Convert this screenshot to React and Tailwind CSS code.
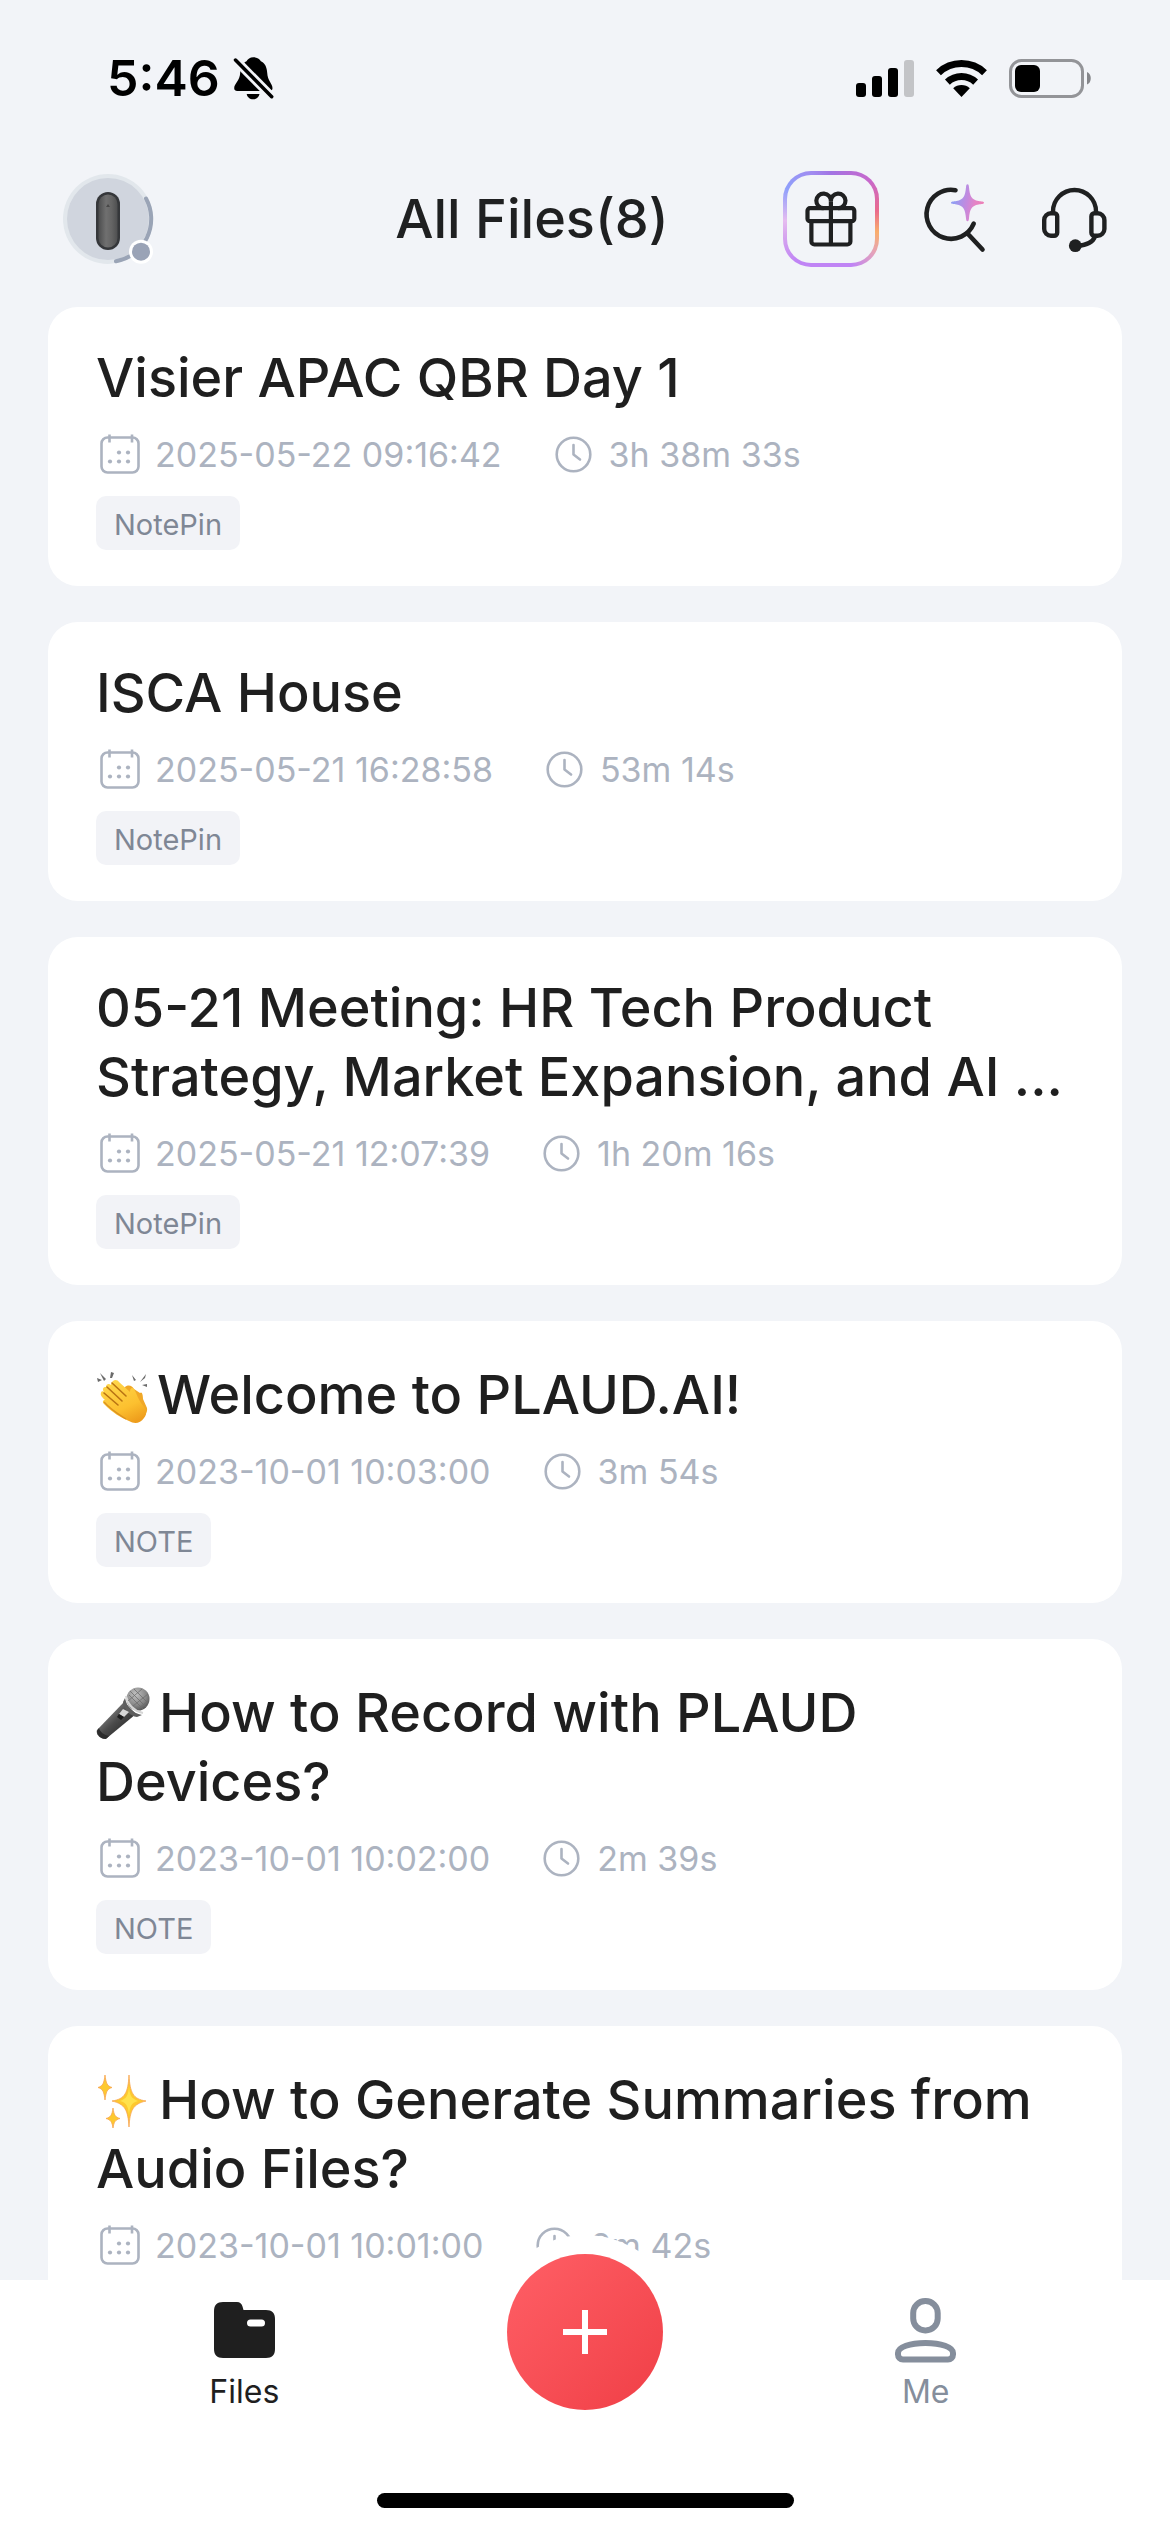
const FILES = [
  { title: "Visier APAC QBR Day 1", date: "2025-05-22 09:16:42", length: "3h 38m 33s", tag: "NotePin" },
  { title: "ISCA House", date: "2025-05-21 16:28:58", length: "53m 14s", tag: "NotePin" },
  {
    title: "05-21 Meeting: HR Tech Product Strategy, Market Expansion, and AI ...",
    date: "2025-05-21 12:07:39",
    length: "1h 20m 16s",
    tag: "NotePin",
  },
  { emoji: ClapEmoji, title: "Welcome to PLAUD.AI!", date: "2023-10-01 10:03:00", length: "3m 54s", tag: "NOTE" },
  { emoji: MicEmoji, title: "How to Record with PLAUD Devices?", date: "2023-10-01 10:02:00", length: "2m 39s", tag: "NOTE" },
  {
    emoji: SparklesEmoji,
    title: "How to Generate Summaries from Audio Files?",
    date: "2023-10-01 10:01:00",
    length: "2m 42s",
    tag: "NOTE",
  },
];

function ClapEmoji() {
  return (
    <svg className="inline-block h-[54px] w-[52px] align-[-10px]" viewBox="0 0 52 54" role="img" aria-label="Clapping hands">
      <defs>
        <linearGradient id="skin" x1="0.2" y1="0" x2="0.7" y2="1">
          <stop offset="0" stopColor="#ffd84e" />
          <stop offset="0.65" stopColor="#fcc02f" />
          <stop offset="1" stopColor="#ee9d1c" />
        </linearGradient>
      </defs>
      <g fill="#6b6b6b">
        <path d="M1 8l5 2-4 2zM4 3l6 6-2 2zM15 2l3 1-2 5-2 0zM36 5l4 5-2 1zM50 4l-1 4-5 4zM46 15l5-1v3z" />
      </g>
      <path d="M29 17c4-3 7-1 9 2l6 4c2-2 3 2 3 6l4 9c1 5-3 9-8 13l-10-2-14-19z" fill="#f0a827" />
      <path
        d="M17 11c2-2 5-1 6 1l11 10c0-4 2-5 4-3 3 5 4 10 7 14 5 6 7 10 3 15-4 6-10 6-15 3C24 47 17 43 8 34c-2-2-1-4 1-4-3-3-5-5-4-7 0-2 2-2 3-1-2-3-1-5 2-5 0-3 3-4 5-2 0-2 1-3 2-4z"
        fill="url(#skin)"
      />
      <path d="M16 13l14 13M11 17l15 14M8 23l14 12" stroke="#b97313" strokeWidth="1.6" strokeLinecap="round" fill="none" />
      <path d="M8 32c7 8 14 12 22 17" stroke="#dc9320" strokeWidth="1.4" fill="none" />
    </svg>
  );
}

function MicEmoji() {
  return (
    <svg className="inline-block h-[54px] w-[54px] align-[-9px]" viewBox="0 0 54 54" role="img" aria-label="Microphone">
      <defs>
        <linearGradient id="micBody" x1="0" y1="0" x2="1" y2="1">
          <stop offset="0.2" stopColor="#8a8a8a" />
          <stop offset="0.5" stopColor="#4b4b4b" />
          <stop offset="0.9" stopColor="#1f1f1f" />
        </linearGradient>
        <radialGradient id="micHead" cx="0.4" cy="0.3" r="0.8">
          <stop offset="0" stopColor="#c2c2c2" />
          <stop offset="0.6" stopColor="#858585" />
          <stop offset="1" stopColor="#474747" />
        </radialGradient>
      </defs>
      <path d="M28 15l12 12L11 51c-4 3-12-3-10-8z" fill="url(#micBody)" />
      <path d="M1 44c0 4 4 8 9 8l3-3C8 48 4 45 3 41z" fill="#2c2c2c" />
      <circle cx="42" cy="12" r="11.5" fill="url(#micHead)" />
      <path d="M29 11c2 9 7 15 17 17l-5 2c-7-1-13-7-14-15z" fill="#5e5e5e" />
      <path d="M30 9c2 9 8 15 17 17" stroke="#d5d5d5" strokeWidth="2" fill="none" />
      <path d="M34 4l16 16M38 2l14 14M33 8l14 14M32 14L46 2M37 19L52 7M42 22l11-9" stroke="#6d6d6d" strokeWidth="0.8" />
      <path d="M27 22l6 3-5 5-5-3z" fill="#d6d6d6" />
      <path d="M23 27l5 3-3 3-4-3z" fill="#1c1c1c" />
    </svg>
  );
}

function SparklesEmoji() {
  return (
    <svg className="inline-block h-[54px] w-[54px] align-[-9px]" viewBox="0 0 54 54" role="img" aria-label="Sparkles">
      <g fill="#fdc92f" stroke="#f7a552" strokeWidth="0.8">
        <path d="M33 1c1 18 4 24 17 26-13 3-16 9-17 26-1-17-4-23-17-26 13-2 16-8 17-26z" />
        <path d="M9 1c1 8 2 11 7 12.500-5 1.500-6 4.500-7 12.500-1-8-2-11-7-12.500 5-1.500 6-4.500 7-12.500z" />
        <path d="M17 34c1 7 2 9 7 10.500-5 1.500-6 3.500-7 9.500-1-6-2-8-7-9.500 5-1.500 6-3.500 7-10.500z" />
      </g>
      <path d="M33 13c1 9 2 11 9 14-7 2-8 5-9 14-1-9-2-12-9-14 7-3 8-5 9-14z" fill="#ffe24d" />
    </svg>
  );
}

function StatusBar() {
  return (
    <div className="flex h-[156px] shrink-0 items-center justify-between pl-[107px] pr-[78px]">
      <div className="flex items-center gap-[12px] text-black">
        <span className="text-[50px] leading-none font-semibold">5:46</span>
        <svg className="h-[46px] w-[44px]" viewBox="0 0 44 46" role="img" aria-label="Silent mode">
          <path d="M21.3 2.3c-3.3 0-5.6 1.8-6.8 4-4 1.8-6 6-6.3 11.5C7.9 26 2.2 28.5 2.2 33.3c0 1.8 1.3 2.8 3 2.8h32.3c1.7 0 3-1 3-2.8 0-4.8-5-7.3-5.3-15.5-.3-5.5-2.3-9.7-6.3-11.5-1.2-2.2-4.3-4-7.6-4z" />
          <path d="M14.7 39h12.8c-.6 3.200-3 5.300-6.400 5.300s-5.800-2.100-6.400-5.300z" />
          <path d="M3.500 5l36.200 36.700" stroke="#f2f4f8" strokeWidth="9" />
          <path d="M3.500 5l36.200 36.700" stroke="#000" strokeWidth="3.500" strokeLinecap="round" />
        </svg>
      </div>
      <div className="flex items-center">
        <svg className="mr-[22px] h-[37px] w-[58px]" viewBox="0 0 58 37" role="img" aria-label="Cellular signal">
          <rect x="0" y="23" width="10" height="14" rx="3" />
          <rect x="16" y="16" width="10" height="21" rx="3" />
          <rect x="32" y="8" width="10" height="29" rx="3" />
          <rect x="48" y="0" width="10" height="37" rx="3" fill="#c3c4c7" />
        </svg>
        <svg className="mr-[22px] h-[37px] w-[51px]" viewBox="0 0 51 37" role="img" aria-label="Wi-Fi">
          <path d="M2.500 12.700a33.500 33.500 0 0 1 46 0" fill="none" stroke="#000" strokeWidth="7" />
          <path d="M11.400 22.100a20.500 20.500 0 0 1 28.200 0" fill="none" stroke="#000" strokeWidth="7" />
          <path d="M25.500 37l-8.300-8.700a12 12 0 0 1 16.600 0z" />
        </svg>
        <svg className="h-[39px] w-[83px]" viewBox="0 0 83 39" role="img" aria-label="Battery">
          <rect x="1.500" y="1.500" width="72" height="36" rx="11" fill="none" stroke="#939498" strokeWidth="3" />
          <rect x="6" y="6" width="25" height="27" rx="6" />
          <path d="M78 13c5 1.500 5 11 0 12.500z" fill="#85868a" />
        </svg>
      </div>
    </div>
  );
}

function DeviceAvatar() {
  return (
    <svg className="h-[93px] w-[93px]" viewBox="0 0 93 93" aria-hidden="true">
      <defs>
        <linearGradient id="pill" x1="0" x2="1" y1="0" y2="0">
          <stop offset="0" stopColor="#4c4d4e" />
          <stop offset="0.4" stopColor="#707070" />
          <stop offset="0.7" stopColor="#646464" />
          <stop offset="1" stopColor="#4e4f50" />
        </linearGradient>
      </defs>
      <circle cx="46" cy="46" r="45" fill="#e2e7ec" />
      <circle cx="46" cy="46" r="41" fill="#d0d5de" />
      <rect x="34" y="19" width="24" height="58" rx="12" fill="#35373a" />
      <rect x="36.500" y="21.500" width="19" height="53" rx="9.500" fill="url(#pill)" />
      <path d="M44 34l2-3 2 3z" fill="#484848" />
      <path d="M84 25.500a43 43 0 0 1-30 62.800" fill="none" stroke="#9aa4b6" strokeWidth="4" strokeLinecap="round" />
      <circle cx="79" cy="78.700" r="12" fill="#fff" />
      <circle cx="79" cy="78.700" r="9" fill="#9aa3b6" />
    </svg>
  );
}

function Header() {
  return (
    <header className="flex h-[126px] shrink-0 items-center pr-[60px] pl-[62px] text-[#1f2021]">
      <div className="flex w-[219px] shrink-0">
        <button aria-label="Device" className="rounded-full">
          <DeviceAvatar />
        </button>
      </div>
      <h1 className="flex-1 text-center text-[54px] leading-[64px] font-medium">All Files(8)</h1>
      <div className="flex items-center">
        <button
          aria-label="Rewards"
          className="mr-[41px] size-[96px] rounded-[28px] bg-[conic-gradient(#a274e4,#c768cc_45deg,#ea6a8c_80deg,#f9ae6c_106deg,#e5a3b9_128deg,#c084f5_155deg,#c084f5_220deg,#d8a8ee_252deg,#e6bcf0_268deg,#8f9ffb_305deg,#a18bf0_338deg,#a274e4)] p-[4px]"
        >
          <span className="flex size-full items-center justify-center rounded-[24px] bg-[#f2f4f8]">
            <svg className="size-[62px]" viewBox="0 0 62 62" fill="none" stroke="currentColor" strokeWidth="4.200" strokeLinejoin="round" aria-hidden="true">
              <rect x="7.500" y="20.200" width="46.800" height="13" rx="2.500" />
              <path d="M11.400 33.500V53.500a3 3 0 0 0 3 3h33a3 3 0 0 0 3-3V33.500M30.900 13.500V56" />
              <path d="M30.900 13.500A7.300 7.300 0 1 0 23.600 20.200M30.900 13.500A7.300 7.300 0 1 1 38.200 20.200" />
            </svg>
          </span>
        </button>
        <button aria-label="Search" className="mr-[50px]">
          <svg className="h-[74px] w-[68px]" viewBox="0 0 68 74" fill="none" aria-hidden="true">
            <defs>
              <linearGradient id="star" x1="0" x2="1" y1="0.400" y2="0.600">
                <stop offset="0.100" stopColor="#929cf2" />
                <stop offset="0.480" stopColor="#c489de" />
                <stop offset="0.720" stopColor="#e484c6" />
                <stop offset="1" stopColor="#ee7fb4" />
              </linearGradient>
            </defs>
            <path d="M35.500 8.200A24.500 24.500 0 1 0 53.700 41.700M48 52l14.500 15.500" stroke="currentColor" strokeWidth="4.600" strokeLinecap="round" />
            <path d="M47.500 2.200c1.300 0 1.300 1.500 1.500 3 .8 9 2.500 12.500 9.500 13.800 3 .5 5.500.3 5.500 1.700s-2.500 1.200-5.500 1.700c-7 1.300-8.700 4.800-9.500 13.800-.2 1.500-.2 3-1.500 3s-1.300-1.500-1.500-3c-.8-9-2.500-12.500-9.500-13.800-3-.5-5.500-.3-5.500-1.700s2.500-1.200 5.500-1.700c7-1.300 8.700-4.800 9.500-13.800.2-1.500.2-3 1.500-3z" fill="url(#star)" />
          </svg>
        </button>
        <button aria-label="Support">
          <svg className="h-[74px] w-[72px]" viewBox="0 0 72 74" fill="none" stroke="currentColor" strokeWidth="4.400" strokeLinecap="round" aria-hidden="true">
            <path d="M15 30V29.500a21.500 21.500 0 0 1 43 0V30" />
            <path d="M13 31.200h3.200a3 3 0 0 1 3 3v16.500a3 3 0 0 1-3 3H13a6.800 6.800 0 0 1-6.800-6.800V38a6.800 6.800 0 0 1 6.800-6.800zM56.400 31.200h3.200a6.800 6.800 0 0 1 6.800 6.800v8.900a6.800 6.800 0 0 1-6.800 6.800h-3.200a3 3 0 0 1-3-3V34.200a3 3 0 0 1 3-3z" />
            <path d="M57 54.500C55 60.500 49 63 39 64" />
            <circle cx="37.300" cy="63.700" r="6.400" fill="currentColor" stroke="none" />
          </svg>
        </button>
      </div>
    </header>
  );
}

function CalendarIcon() {
  return (
    <svg className="size-[40px]" viewBox="0 0 40 40" fill="none" stroke="currentColor" strokeWidth="2.600" aria-hidden="true">
      <rect x="1.500" y="3.500" width="37" height="35" rx="6" />
      <path d="M9.500 0.500v8M32 0.500v8" />
      <g fill="currentColor" stroke="none">
        <circle cx="19" cy="18.500" r="2.100" />
        <circle cx="28" cy="18.500" r="2.100" />
        <circle cx="10" cy="27.500" r="2.100" />
        <circle cx="19" cy="27.500" r="2.100" />
        <circle cx="28" cy="27.500" r="2.100" />
      </g>
    </svg>
  );
}

function ClockIcon() {
  return (
    <svg className="size-[37px]" viewBox="0 0 37 37" fill="none" stroke="currentColor" strokeWidth="2.600" strokeLinecap="round" strokeLinejoin="round" aria-hidden="true">
      <circle cx="18.500" cy="18.500" r="16.800" />
      <path d="M18.500 9v9.500l6.500 5" />
    </svg>
  );
}

function FileCard({ file }) {
  const Emoji = file.emoji;
  return (
    <li className={Emoji ? "rounded-[30px] bg-white px-[48px] pt-[39px] pb-[36px]" : "rounded-[30px] bg-white px-[48px] py-[36px]"}>
      <h2 className="text-[54px] leading-[69px] font-medium text-[#1f1f1f]">
        {Emoji && (
          <span className="mr-[9px] inline-block h-[60px] align-baseline leading-[60px]">
            <Emoji />
          </span>
        )}
        {file.title}
      </h2>
      <div className="mt-[22px] flex h-[40px] items-center text-[34px] text-[#acb3c0]">
        <span className="ml-[4px] flex items-center gap-[15px]">
          <CalendarIcon />
          <time>{file.date}</time>
        </span>
        <span className="ml-[53px] flex items-center gap-[17px]">
          <ClockIcon />
          <span>{file.length}</span>
        </span>
      </div>
      <div className="mt-[22px] flex">
        <span className="h-[54px] rounded-[10px] bg-[#f2f3f7] px-[18px] text-[29px] leading-[57px] text-[#7f8795]">{file.tag}</span>
      </div>
    </li>
  );
}

function BottomNav() {
  return (
    <nav className="relative flex h-[252px] shrink-0 flex-col items-center bg-white">
      <div className="grid w-full grid-cols-3 justify-items-center px-[74px]">
        <a href="#files" className="flex flex-col items-center gap-[9px] pt-[17px] text-[#1f1f1f]">
          <svg className="h-[66px] w-[61px]" viewBox="0 0 61 66" aria-hidden="true">
            <path d="M9 5h14c3 0 4.500 1.500 5.500 4.500L29.500 13H52c6 0 9 3 9 9v30c0 6-3 9-9 9H9c-6 0-9-3-9-9V14c0-6 3-9 9-9z" fill="currentColor" />
            <rect x="33" y="22.500" width="18" height="7" rx="3.500" fill="#fff" />
          </svg>
          <span className="text-[32px] leading-[40px]">Files</span>
        </a>
        <button aria-label="Add" className="-mt-[45px] -mb-[45px] size-[194px] rounded-full bg-white p-[19px]">
          <span className="flex size-full items-center justify-center rounded-full bg-linear-to-br from-[#ff5f66] to-[#f03e46]">
            <svg className="size-[44px]" viewBox="0 0 44 44" stroke="#fff" strokeWidth="6" aria-hidden="true">
              <path d="M22 0v44M0 22h44" />
            </svg>
          </span>
        </button>
        <a href="#me" className="flex flex-col items-center gap-[9px] pt-[17px] text-[#858e9c]">
          <svg className="h-[66px] w-[63px]" viewBox="0 0 63 66" fill="none" stroke="currentColor" strokeWidth="6" aria-hidden="true">
            <rect x="19.200" y="4" width="24.500" height="29.500" rx="12" />
            <path d="M4 56C4 50 16 46 31.500 46S59 50 59 56v1.500a5 5 0 0 1-5 5H9a5 5 0 0 1-5-5z" />
          </svg>
          <span className="text-[32px] leading-[40px]">Me</span>
        </a>
      </div>
      <div className="mt-auto mb-[24px] h-[15px] w-[417px] rounded-full bg-black" />
    </nav>
  );
}

export default function App() {
  return (
    <div className="flex h-screen flex-col overflow-hidden bg-[#f2f4f8] font-['Inter','Liberation_Sans',sans-serif]">
      <StatusBar />
      <Header />
      <main className="min-h-0 flex-1 overflow-hidden px-[48px] pt-[25px]">
        <ul className="flex flex-col gap-[36px]">
          {FILES.map((file) => (
            <FileCard key={file.date} file={file} />
          ))}
        </ul>
      </main>
      <BottomNav />
    </div>
  );
}
